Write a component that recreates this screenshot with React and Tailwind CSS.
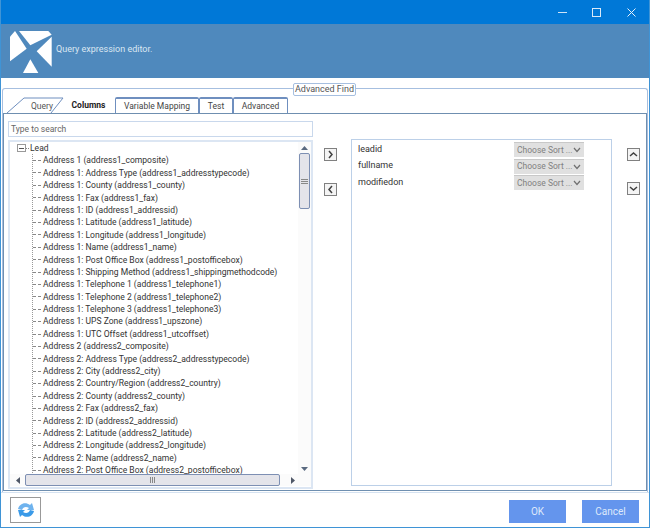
import React from "react";

const rows = [
  "Address 1 (address1_composite)",
  "Address 1: Address Type (address1_addresstypecode)",
  "Address 1: County (address1_county)",
  "Address 1: Fax (address1_fax)",
  "Address 1: ID (address1_addressid)",
  "Address 1: Latitude (address1_latitude)",
  "Address 1: Longitude (address1_longitude)",
  "Address 1: Name (address1_name)",
  "Address 1: Post Office Box (address1_postofficebox)",
  "Address 1: Shipping Method (address1_shippingmethodcode)",
  "Address 1: Telephone 1 (address1_telephone1)",
  "Address 1: Telephone 2 (address1_telephone2)",
  "Address 1: Telephone 3 (address1_telephone3)",
  "Address 1: UPS Zone (address1_upszone)",
  "Address 1: UTC Offset (address1_utcoffset)",
  "Address 2 (address2_composite)",
  "Address 2: Address Type (address2_addresstypecode)",
  "Address 2: City (address2_city)",
  "Address 2: Country/Region (address2_country)",
  "Address 2: County (address2_county)",
  "Address 2: Fax (address2_fax)",
  "Address 2: ID (address2_addressid)",
  "Address 2: Latitude (address2_latitude)",
  "Address 2: Longitude (address2_longitude)",
  "Address 2: Name (address2_name)",
  "Address 2: Post Office Box (address2_postofficebox)",
];

function Logo() {
  return (
    <svg width="51" height="50" viewBox="0 0 153 150" className="shrink-0">
      <g fill="#fff">
        <path d="M15 32 L30 15 L65 68 L15 106 Z" />
        <path d="M42 15 L130 15 L140 26 L76 58 Z" />
        <path d="M140 32 L140 122 L95 76 Z" />
        <path d="M76 100 L100 141 L54 141 Z" />
      </g>
    </svg>
  );
}

function SquareBtn({ d }) {
  return (
    <div className="w-[13px] h-[13px] border border-[#808080] bg-[#f4f4f4] flex items-center justify-center">
      <svg width="9" height="9" viewBox="0 0 9 9" fill="none" stroke="#404040" strokeWidth="1.5">
        <path d={d} />
      </svg>
    </div>
  );
}

function SortSelect() {
  return (
    <div className="w-[70px] h-[15px] bg-[#e0e0e0] border-t border-[#c8c8c8] flex items-center justify-between pl-[3px] pr-[3px] text-[8.5px] text-[#808080] whitespace-nowrap">
      <span>Choose Sort ...</span>
      <svg width="8" height="6" viewBox="0 0 8 6" fill="none" stroke="#707070" strokeWidth="1.2">
        <path d="M1 1 L4 4.5 L7 1" />
      </svg>
    </div>
  );
}

function Tab({ children, className }) {
  return (
    <div className={"h-[16px] border-t-2 border-x border-[#6f8fbf] rounded-t-[2px] flex items-center justify-center text-[8.5px] text-[#444] " + className}>
      {children}
    </div>
  );
}

export default function App() {
  return (
    <div
      className="w-[650px] h-[528px] bg-white border-x border-b border-[#3f94d6] flex flex-col overflow-hidden text-[#333]"
      style={{ fontFamily: 'Roboto, "Open Sans", sans-serif' }}
    >
      <div className="h-[24px] bg-[#0078d7] flex items-center justify-end shrink-0">
        <svg width="9" height="9" viewBox="0 0 9 9" className="mr-[25px]"><path d="M0 4.5 H9" stroke="#cfe4f7" strokeWidth="1" /></svg>
        <svg width="9" height="9" viewBox="0 0 9 9" className="mr-[26px]"><rect x="0.5" y="0.5" width="8" height="8" fill="none" stroke="#d8e9f8" /></svg>
        <svg width="9" height="9" viewBox="0 0 9 9" className="mr-[13px]"><path d="M0.5 0.5 L8.5 8.5 M8.5 0.5 L0.5 8.5" stroke="#e6f1fb" strokeWidth="1" /></svg>
      </div>

      <div className="h-[54px] bg-[#4f89bd] flex items-center pl-[4px] shrink-0">
        <Logo />
        <span className="text-[9px] text-[#dbe7f2] -mt-[2px]">Query expression editor.</span>
      </div>

      <div className="relative mt-[10px] mx-[1px] h-[404px] shrink-0 border-t border-x border-[#a6bfe0] rounded-t-[3px] pt-[8px]">
        <div className="absolute left-[290px] -top-[6px] w-[63px] h-[13px] bg-white border border-[#a6bfe0] rounded-[2px] flex items-center justify-center text-[9px] text-[#555] whitespace-nowrap">
          Advanced Find
        </div>

        <div className="relative h-[16px] flex items-end pl-[59px]">
          <svg width="60" height="17" viewBox="0 0 60 17" className="absolute left-[3px] top-0">
            <path d="M1 16 L18 1 H57 L45 16" fill="#fff" stroke="#6f8fbf" strokeWidth="1" />
            <text x="25" y="12" fontSize="8.5" fill="#555" fontFamily="Roboto, sans-serif">Query</text>
          </svg>
          <div className="w-[53px] h-[16px] flex items-center justify-center text-[8.5px] font-bold text-[#222] relative">Columns</div>
          <Tab className="w-[84px] bg-white">Variable Mapping</Tab>
          <Tab className="w-[34px] bg-white">Test</Tab>
          <Tab className="w-[55px] bg-white">Advanced</Tab>
        </div>

        <div className="h-[378px] border border-[#6f8fb0] pl-[4px] pt-[7px] flex">
          <div className="w-[305px] flex flex-col shrink-0">
            <div className="h-[16px] border border-[#c9d8ec] flex items-center pl-[2px] text-[8.5px] text-[#666] shrink-0">Type to search</div>
            <div className="mt-[3px] h-[349px] border-2 border-[#dce6f3] flex flex-col overflow-hidden shrink-0">
              <div className="flex flex-1 min-h-0">
                <div className="flex-1 min-w-0 pl-[7px] text-[8.55px] leading-[12.4px] text-[#333] overflow-hidden whitespace-nowrap">
                  <div className="h-[12.4px] flex items-center">
                    <span className="w-[9px] h-[8px] border border-[#999] bg-white flex items-center justify-center shrink-0">
                      <span className="w-[5px] h-px bg-[#555]" />
                    </span>
                    <span className="w-[3px] border-t border-dotted border-[#888] mr-[1px]" />
                    <span>Lead</span>
                  </div>
                  <div className="ml-[15px] border-l border-dotted border-[#999]">
                    {rows.map((r) => (
                      <div key={r} className="h-[12.4px] flex items-center">
                        <span className="w-[8px] border-t border-dashed border-[#888] mr-[2px] shrink-0" />
                        <span>{r}</span>
                      </div>
                    ))}
                  </div>
                </div>
                <div className="w-[13px] shrink-0 bg-[#fbfbfb] flex flex-col items-center pt-[4px] pb-[3px]">
                  <svg width="7" height="4" viewBox="0 0 7 4"><path d="M0 4 L3.5 0 L7 4 Z" fill="#5a6a80" /></svg>
                  <div className="mt-[3px] w-[11px] h-[56px] bg-[#e4e4ea] border border-[#7d8fb3] rounded-[2px] flex flex-col items-center justify-center gap-px">
                    <span className="w-[7px] h-px bg-[#888]" />
                    <span className="w-[7px] h-px bg-[#888]" />
                    <span className="w-[7px] h-px bg-[#888]" />
                  </div>
                  <div className="flex-1" />
                  <svg width="7" height="4" viewBox="0 0 7 4"><path d="M0 0 L3.5 4 L7 0 Z" fill="#5a6a80" /></svg>
                </div>
              </div>
              <div className="h-[12px] shrink-0 flex items-center bg-[#fbfbfb] pl-[6px] mb-px">
                <svg width="4" height="7" viewBox="0 0 4 7"><path d="M4 0 L0 3.5 L4 7 Z" fill="#505868" /></svg>
                <div className="ml-[5px] w-[255px] h-[12px] bg-[#e4e4ea] border border-[#7d8fb3] rounded-[2px] flex items-center justify-center gap-px">
                  <span className="w-px h-[6px] bg-[#888]" />
                  <span className="w-px h-[6px] bg-[#888]" />
                  <span className="w-px h-[6px] bg-[#888]" />
                </div>
                <svg width="4" height="7" viewBox="0 0 4 7" className="ml-[11px]"><path d="M0 0 L4 3.5 L0 7 Z" fill="#505868" /></svg>
              </div>
            </div>
          </div>

          <div className="ml-[11px] mt-[27px] flex flex-col gap-[22px] shrink-0">
            <SquareBtn d="M3 1 L6 4.5 L3 8" />
            <SquareBtn d="M6 1 L3 4.5 L6 8" />
          </div>

          <div className="ml-[14px] mt-[18px] w-[261px] h-[347px] border border-[#bcd0e8] shrink-0 flex flex-col pt-[2px] pl-[6px] gap-[1.6px]">
            {["leadid", "fullname", "modifiedon"].map((n) => (
              <div key={n} className="flex items-center justify-between w-[226px] text-[9px] text-[#333]">
                <span>{n}</span>
                <SortSelect />
              </div>
            ))}
          </div>

          <div className="ml-[15px] mt-[27px] flex flex-col gap-[21px] shrink-0">
            <SquareBtn d="M1 6 L4.5 3 L8 6" />
            <SquareBtn d="M1 3 L4.5 6 L8 3" />
          </div>
        </div>
      </div>

      <div className="flex-1 flex items-center justify-between pl-[9px] pr-[10px] border-t border-[#d5e2f1]">
        <div className="w-[31px] h-[26px] border border-[#999] flex items-center justify-center">
          <svg width="20" height="20" viewBox="0 0 20 20" fill="none">
            <path d="M2 9 C3 4 9 1 14 5 L16 3 L18 10 L11 10 L13 8 C10 6 7 7 6 10 Z" fill="#6fb3ee" />
            <path d="M18 11 C17 16 11 19 6 15 L4 17 L2 10 L9 10 L7 12 C10 14 13 13 14 10 Z" fill="#3a9ae8" />
          </svg>
        </div>
        <div className="flex gap-[16px] mt-[2px]">
          <div className="w-[57px] h-[23px] bg-[#6495ed] flex items-center justify-center text-[10px] text-[#dfe9fb]">OK</div>
          <div className="w-[57px] h-[23px] bg-[#6495ed] flex items-center justify-center text-[10px] text-[#dfe9fb]">Cancel</div>
        </div>
      </div>
    </div>
  );
}
